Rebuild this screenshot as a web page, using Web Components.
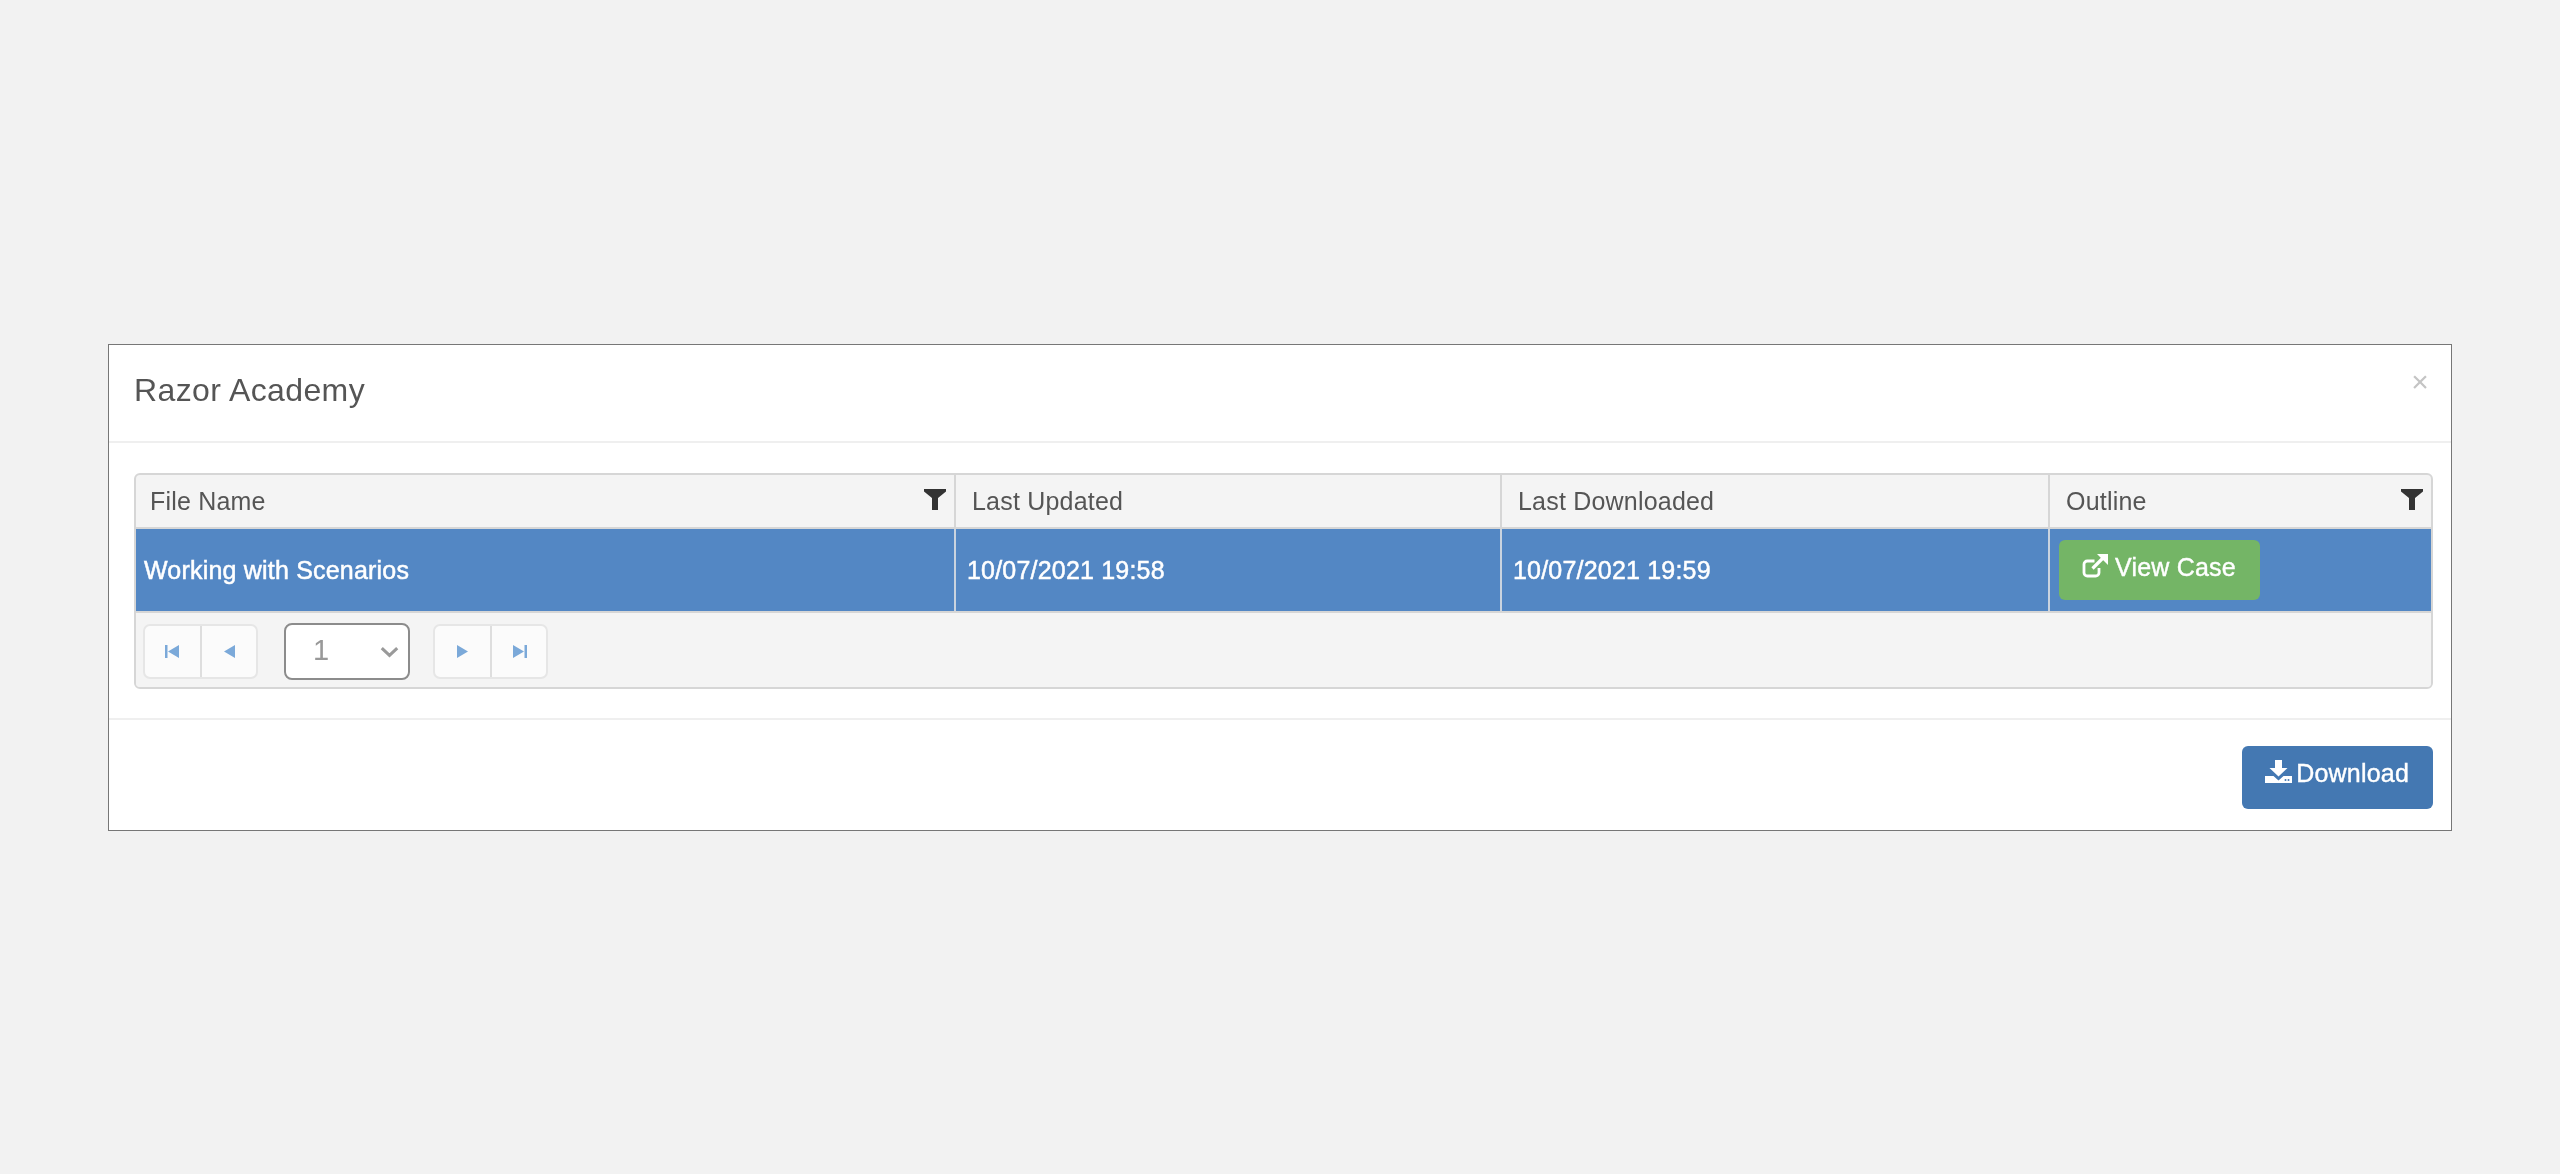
<!DOCTYPE html>
<html>
<head>
<meta charset="utf-8">
<title>Razor Academy</title>
<style>
    html, body {
        margin: 0;
        height: 100%;
        background: #f2f2f2;
    }

    body {
        display: flex;
        box-sizing: border-box;
        padding-top: 1px;
        align-items: center;
        justify-content: center;
        font-family: "Liberation Sans", Arial, sans-serif;
        font-size: 25px;
        letter-spacing: 0.2px;
        color: #555;
    }

    .frame {
        border: 1px solid #777;
    }
</style>
</head>
<body>
<div class="frame">
<rz-modal heading="Razor Academy">
    <rz-grid></rz-grid>
    <rz-button slot="footer" kind="download">Download</rz-button>
</rz-modal>
</div>

<script>
const icons = {
    filter: `<svg width="22" height="24" viewBox="0 0 22 24"><path fill="currentColor" d="M0 2h22v2.400l-8 6.600v12h-6V11L0 4.400z"/></svg>`,
    view: `<svg width="28" height="28" viewBox="0 0 28 28" fill="none" stroke="currentColor"><path stroke-width="2.800" d="M18 16v4.700a3.300 3.300 0 0 1-3.300 3.300H6.300A3.300 3.300 0 0 1 3 20.700V12.300A3.300 3.300 0 0 1 6.300 9h7.200"/><path stroke-width="3.200" d="M11.500 16.500L22 6"/><path fill="currentColor" stroke="none" d="M16 2h11v11z"/></svg>`,
    download: `<svg width="27" height="24" viewBox="0 0 27 24"><path fill="currentColor" d="M10 0h7v8h5.500L13.500 16.500 4.500 8H10z"/><path fill="currentColor" d="M0 16h8.500l5 4.500 5-4.500H27v7H0z"/><circle cx="20.500" cy="20" r="1" fill="#4478b2"/><circle cx="23.500" cy="20" r="1" fill="#4478b2"/></svg>`,
    first: `<svg width="15" height="15" viewBox="0 0 15 15"><path fill="currentColor" d="M0 1h2.500v13H0zM14 1v13L3 7.500z"/></svg>`,
    prev: `<svg width="13" height="15" viewBox="0 0 13 15"><path fill="currentColor" d="M12 1v13L1 7.500z"/></svg>`,
    next: `<svg width="13" height="15" viewBox="0 0 13 15"><path fill="currentColor" d="M1 1v13l11-6.500z"/></svg>`,
    last: `<svg width="15" height="15" viewBox="0 0 15 15"><path fill="currentColor" d="M15 1h-2.500v13H15zM1 1v13l11-6.500z"/></svg>`
}

class RzModal extends HTMLElement {
    constructor() {
        super();
        this.attachShadow({mode: 'open'});
        this.shadowRoot.innerHTML = `
        <style>
            :host {
                display: block;
                width: 2342px;
                box-sizing: border-box;
                background: #fff;
                filter: blur(0.6px);
            }
            header {
                display: flex;
                justify-content: space-between;
                height: 96px;
                padding: 0 22px 0 25px;
                border-bottom: 2px solid #efefef;
            }
            h2 {
                margin: 27px 0 0;
                font-size: 32px;
                font-weight: 400;
                letter-spacing: 0.4px;
                line-height: 37px;
                color: #555;
            }
            .close {
                margin-top: 22px;
                font-size: 30px;
                line-height: 30px;
                color: #c4c4c4;
            }
            main {
                padding: 30px 18px 29px 25px;
                border-bottom: 2px solid #efefef;
            }
            footer {
                display: flex;
                justify-content: flex-end;
                padding: 26px 18px 21px;
            }
        </style>
        <header>
            <h2>${this.getAttribute('heading')}</h2>
            <span class="close">×</span>
        </header>
        <main><slot></slot></main>
        <footer><slot name="footer"></slot></footer>
        `
    }
}

class RzButton extends HTMLElement {
    constructor() {
        super();
        this.attachShadow({mode: 'open'});
        const download = this.getAttribute('kind') === 'download'
        this.shadowRoot.innerHTML = `
        <style>
            :host {
                display: inline-flex;
                align-items: center;
                gap: ${download ? 4 : 6}px;
                box-sizing: border-box;
                height: ${download ? 63 : 60}px;
                padding: 0 24px ${download ? 8 : 5}px ${download ? 23 : 22}px;
                border-radius: 6px;
                color: #fff;
                background: ${download ? '#4478b2' : '#74b566'};
                font-size: 25px;
                -webkit-text-stroke: 0.4px #fff;
            }
            svg { display: block; margin-top: -3px; }
        </style>
        ${download ? icons.download : icons.view}
        <slot></slot>
        `
    }
}

class RzPager extends HTMLElement {
    constructor() {
        super();
        this.attachShadow({mode: 'open'});
        this.shadowRoot.innerHTML = `
        <style>
            :host {
                display: flex;
                align-items: center;
                height: 74px;
                padding: 2px 0 0 7px;
                box-sizing: border-box;
                background: #f4f4f4;
            }
            .group {
                display: flex;
                height: 55px;
                box-sizing: border-box;
                background: #fbfbfb;
                border: 2px solid #e6e6e6;
                border-radius: 7px;
                color: #7ba9d9;
            }
            .group span {
                display: flex;
                align-items: center;
                justify-content: center;
                width: 55px;
            }
            .group span + span { width: 54px; border-left: 2px solid #dedede; }
            .page {
                display: flex;
                align-items: center;
                justify-content: space-between;
                box-sizing: border-box;
                width: 126px;
                height: 57px;
                margin: 0 23px 0 26px;
                padding: 0 9px 2px 27px;
                background: #fff;
                border: 2px solid #8c8c8c;
                border-radius: 8px;
                font-size: 29px;
                color: #999;
            }
            .page svg { display: block; margin-top: 4px; }
        </style>
        <div class="group"><span>${icons.first}</span><span>${icons.prev}</span></div>
        <div class="page">1<svg width="19" height="12" viewBox="0 0 22 14" fill="none"><path stroke="#9a9a9a" stroke-width="3.600" d="M2 2.500l9 8.500 9-8.500"/></svg></div>
        <div class="group"><span>${icons.next}</span><span>${icons.last}</span></div>
        `
    }
}

class RzGrid extends HTMLElement {
    constructor() {
        super();
        this.attachShadow({mode: 'open'});
        this.shadowRoot.innerHTML = `
        <style>
            :host {
                display: block;
                box-sizing: border-box;
                border: 2px solid #d6d6d6;
                border-radius: 6px;
                overflow: hidden;
                background: #f4f4f4;
            }
            .cols {
                display: grid;
                grid-template-columns: 818px 546px 548px 1fr;
            }
            .head {
                height: 54px;
                box-sizing: border-box;
                border-bottom: 2px solid #d6d6d6;
            }
            .head div {
                display: flex;
                align-items: center;
                justify-content: space-between;
                padding: 0 8px 0 14px;
                color: #555;
            }
            .head div + div { border-left: 2px solid #d6d6d6; padding-left: 16px; }
            .head svg { color: #333; display: block; margin-top: -4px; }
            .row {
                height: 84px;
                box-sizing: border-box;
                background: #5387c4;
                border-bottom: 2px solid #d6d6d6;
                color: #fff;
                -webkit-text-stroke: 0.5px #fff;
            }
            .row div {
                display: flex;
                align-items: center;
                padding: 0 0 0 8px;
            }
            .row div + div {
                border-left: 2px solid #c9d3df;
                padding-left: 11px;
            }
            .row div:last-child { padding-left: 9px; }
        </style>
        <div class="cols head">
            <div>File Name${icons.filter}</div>
            <div>Last Updated</div>
            <div>Last Downloaded</div>
            <div>Outline${icons.filter}</div>
        </div>
        <div class="cols row">
            <div>Working with Scenarios</div>
            <div>10/07/2021 19:58</div>
            <div>10/07/2021 19:59</div>
            <div><rz-button>View Case</rz-button></div>
        </div>
        <rz-pager></rz-pager>
        `
    }
}

customElements.define('rz-button', RzButton);
customElements.define('rz-pager', RzPager);
customElements.define('rz-grid', RzGrid);
customElements.define('rz-modal', RzModal);
</script>
</body>
</html>
